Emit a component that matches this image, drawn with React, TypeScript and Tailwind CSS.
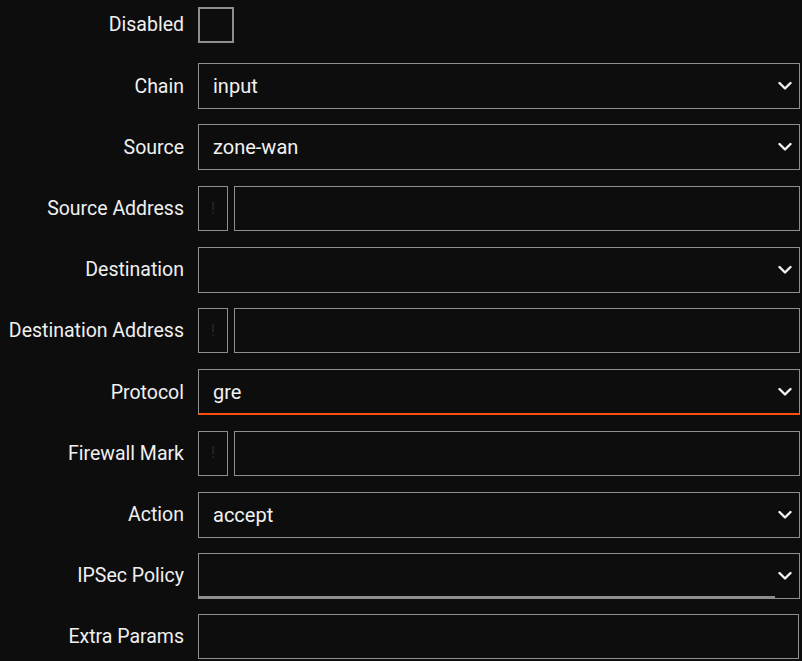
import { type ReactNode } from 'react';

const Chevron = () => (
  <svg width="14" height="9" viewBox="0 0 14 9" className="absolute right-[7px] top-1/2 -translate-y-1/2">
    <path d="M1.5 1.5 L7 7 L12.5 1.5" fill="none" stroke="#f2f2f2" strokeWidth="2.4" strokeLinecap="round" strokeLinejoin="round" />
  </svg>
);

interface RowProps {
  label: string;
  children: ReactNode;
}

const Row = ({ label, children }: RowProps) => (
  <div className="flex items-center h-[46px]">
    <div className="w-[184px] shrink-0 text-right text-[19.5px] text-[#f0f0f0] whitespace-nowrap">{label}</div>
    <div className="ml-[14px] flex-1 h-full flex items-center">{children}</div>
  </div>
);

const Select = ({ value, accent, underline }: { value: string; accent?: boolean; underline?: boolean }) => (
  <div
    className={`relative w-full h-[46px] border border-[#8e8e8e] bg-[#0d0d0d] flex items-center pl-[14px] text-[20px] text-[#f2f2f2] ${accent ? 'border-b-2 border-b-[#ff4f0f]' : ''}`}
  >
    {value}
    <Chevron />
    {underline && <div className="absolute left-[-1px] bottom-0 h-[2px] w-[577px] bg-[#8e8e8e]" />}
  </div>
);

const Invertable = () => (
  <div className="flex w-full h-[45px] gap-[6px]">
    <div className="w-[30px] h-full border border-[#8e8e8e] flex items-center justify-center text-[16px] text-[#2b2a17]">!</div>
    <div className="flex-1 h-full border border-[#8e8e8e]" />
  </div>
);

export default function App() {
  return (
    <div className="w-[802px] h-[661px] bg-[#0d0d0d] overflow-hidden pt-[2px] pr-[2px] font-['Roboto',_'Liberation_Sans',_sans-serif]">
      <div className="flex flex-col gap-[15.2px]">
        <Row label="Disabled">
          <div className="w-[36px] h-[36px] border-2 border-[#8e8e8e]" />
        </Row>
        <Row label="Chain"><Select value="input" /></Row>
        <Row label="Source"><Select value="zone-wan" /></Row>
        <Row label="Source Address"><Invertable /></Row>
        <Row label="Destination"><Select value="" /></Row>
        <Row label="Destination Address"><Invertable /></Row>
        <Row label="Protocol"><Select value="gre" accent /></Row>
        <Row label="Firewall Mark"><Invertable /></Row>
        <Row label="Action"><Select value="accept" /></Row>
        <Row label="IPSec Policy"><Select value="" underline /></Row>
        <Row label="Extra Params">
          <div className="w-[601px] h-[45px] border border-[#8e8e8e]" />
        </Row>
      </div>
    </div>
  );
}
